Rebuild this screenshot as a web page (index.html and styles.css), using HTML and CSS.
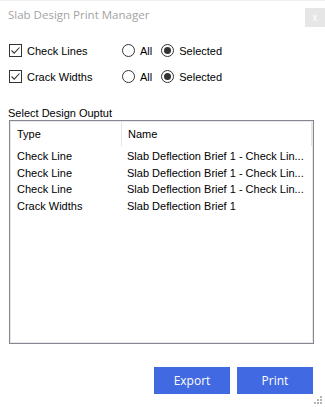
FILE: index.html
```html
<!DOCTYPE html>
<html>
<head>
  <title>Slab Design Print Manager</title>
  <meta charset="utf-8">
  <link rel="stylesheet" href="styles.css">
</head>
<body>
  <div class="window">
    <div class="titlebar">
      <span class="title">Slab Design Print Manager</span>
      <button class="close-btn">x</button>
    </div>

    <div class="options">
      <div class="option-row">
        <label class="check">
          <span class="box checked">
            <svg width="11" height="11" viewBox="0 0 11 11"><path d="M1.5 5.5 L4.2 8.2 L9.5 2.5" fill="none" stroke="#333" stroke-width="1.1"/></svg>
          </span>
          Check Lines
        </label>
        <div class="radios">
          <label class="radio"><span class="dot"></span>All</label>
          <label class="radio"><span class="dot on"></span>Selected</label>
        </div>
      </div>
      <div class="option-row">
        <label class="check">
          <span class="box checked">
            <svg width="11" height="11" viewBox="0 0 11 11"><path d="M1.5 5.5 L4.2 8.2 L9.5 2.5" fill="none" stroke="#333" stroke-width="1.1"/></svg>
          </span>
          Crack Widths
        </label>
        <div class="radios">
          <label class="radio"><span class="dot"></span>All</label>
          <label class="radio"><span class="dot on"></span>Selected</label>
        </div>
      </div>
    </div>

    <div class="list-label">Select Design Ouptut</div>
    <div class="listbox">
      <div class="list-head">
        <div class="col-type">Type</div>
        <div class="col-name">Name</div>
        <div class="col-rest"></div>
      </div>
      <div class="list-row"><div class="col-type">Check Line</div><div class="col-name">Slab Deflection Brief 1 - Check Lin...</div></div>
      <div class="list-row"><div class="col-type">Check Line</div><div class="col-name">Slab Deflection Brief 1 - Check Lin...</div></div>
      <div class="list-row"><div class="col-type">Check Line</div><div class="col-name">Slab Deflection Brief 1 - Check Lin...</div></div>
      <div class="list-row"><div class="col-type">Crack Widths</div><div class="col-name">Slab Deflection Brief 1</div></div>
    </div>

    <div class="actions">
      <button class="action-btn">Export</button>
      <button class="action-btn">Print</button>
    </div>

    <div class="grip">
      <svg width="8" height="8" viewBox="0 0 8 8" fill="#b4b4b4">
        <rect x="6" y="0" width="2" height="2"/>
        <rect x="3" y="3" width="2" height="2"/>
        <rect x="6" y="3" width="2" height="2"/>
        <rect x="0" y="6" width="2" height="2"/>
        <rect x="3" y="6" width="2" height="2"/>
        <rect x="6" y="6" width="2" height="2"/>
      </svg>
    </div>
  </div>
</body>
</html>
```

FILE: styles.css
```css
body {
  margin: 0;
  background: #ffffff;
  font-family: "Liberation Sans", Arial, sans-serif;
  font-size: 11px;
  color: #000000;
}

.window {
  position: relative;
  width: 325px;
  height: 407px;
  box-sizing: border-box;
  border-top: 1px solid #f0f0f0;
}

/* Title bar */
.titlebar {
  display: flex;
  justify-content: space-between;
  align-items: flex-start;
  height: 34px;
  padding-left: 8px;
}

.title {
  font-family: "Open Sans", "Noto Sans", sans-serif;
  font-size: 11.5px;
  color: #a3a3a3;
  margin-top: 6px;
}

.close-btn {
  width: 20px;
  height: 19px;
  margin-top: 7px;
  background: #e6e6e6;
  border: none;
  color: #ffffff;
  font-size: 10px;
  font-family: "Liberation Sans", sans-serif;
  padding: 0;
}

/* Options */
.options {
  padding-left: 9px;
  display: flex;
  flex-direction: column;
  gap: 7px;
  margin-top: 6px;
}

.option-row {
  display: flex;
  align-items: center;
  height: 19px;
}

.check {
  display: flex;
  align-items: center;
  width: 113px;
  gap: 5px;
}

.box {
  width: 11px;
  height: 11px;
  border: 1px solid #333333;
  display: flex;
}

.radios {
  display: flex;
  gap: 9px;
}

.radio {
  display: flex;
  align-items: center;
  gap: 5px;
}

.dot {
  width: 11px;
  height: 11px;
  border: 1px solid #333333;
  border-radius: 50%;
  display: flex;
  align-items: center;
  justify-content: center;
}

.dot.on::after {
  content: "";
  width: 7px;
  height: 7px;
  border-radius: 50%;
  background: #333333;
}

/* List */
.list-label {
  margin-top: 21px;
  padding-left: 8px;
  height: 13px;
}

.listbox {
  margin-left: 9px;
  width: 305px;
  height: 224px;
  box-sizing: border-box;
  border: 1px solid #828790;
  box-shadow: inset 0 0 0 1px #e8e8ec;
  padding: 1px;
}

.list-head {
  display: flex;
  height: 24px;
  align-items: center;
  margin-bottom: 2px;
}

.list-head .col-name {
  border-left: 1px solid #e5e5e5;
  align-self: stretch;
  display: flex;
  align-items: center;
}

.list-head .col-rest {
  width: 180px;
  align-self: stretch;
  border-right: 1px solid #e5e5e5;
}

.list-row {
  display: flex;
  height: 16.6px;
  align-items: center;
}

.col-type {
  width: 104px;
  padding-left: 6px;
  flex-shrink: 0;
}

.col-name {
  padding-left: 6px;
  white-space: nowrap;
}

/* Buttons */
.actions {
  display: flex;
  justify-content: flex-end;
  gap: 7px;
  padding-right: 12px;
  margin-top: 23px;
}

.action-btn {
  width: 76px;
  height: 27px;
  background: #4169e1;
  border: none;
  color: #ffffff;
  font-family: "Open Sans", "Noto Sans", sans-serif;
  font-size: 12px;
  padding: 0;
}

.grip {
  position: absolute;
  right: 3px;
  bottom: 3px;
  display: flex;
}
```
